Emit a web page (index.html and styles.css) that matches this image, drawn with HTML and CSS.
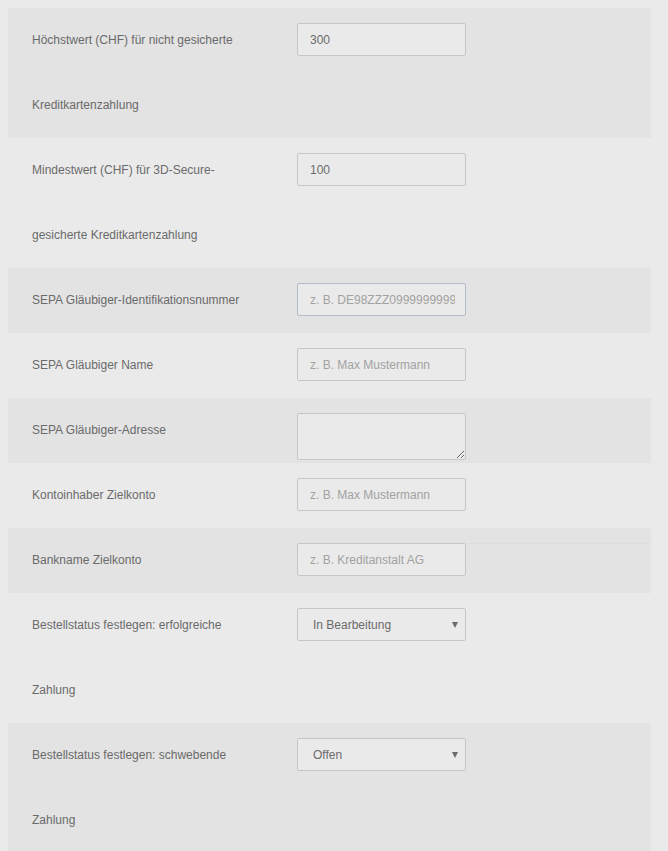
FILE: index.html
```html
<!DOCTYPE html>
<html lang="de">
<head>
<meta charset="utf-8">
<title>Zahlungseinstellungen</title>
<link rel="stylesheet" href="styles.css">
</head>
<body>
<div class="settings">
  <div class="row shaded">
    <div class="label">Höchstwert (CHF) für nicht gesicherte Kreditkartenzahlung</div>
    <div class="field"><input class="control" type="text" value="300"></div>
  </div>
  <div class="row">
    <div class="label">Mindestwert (CHF) für 3D-Secure-gesicherte Kreditkartenzahlung</div>
    <div class="field"><input class="control" type="text" value="100"></div>
  </div>
  <div class="row shaded">
    <div class="label">SEPA Gläubiger-Identifikationsnummer</div>
    <div class="field"><input class="control focus" type="text" placeholder="z. B. DE98ZZZ09999999999"></div>
  </div>
  <div class="row">
    <div class="label">SEPA Gläubiger Name</div>
    <div class="field"><input class="control" type="text" placeholder="z. B. Max Mustermann"></div>
  </div>
  <div class="row shaded">
    <div class="label">SEPA Gläubiger-Adresse</div>
    <div class="field"><textarea class="control area"></textarea></div>
  </div>
  <div class="row">
    <div class="label">Kontoinhaber Zielkonto</div>
    <div class="field"><input class="control" type="text" placeholder="z. B. Max Mustermann"></div>
  </div>
  <div class="row shaded">
    <div class="label">Bankname Zielkonto</div>
    <div class="field field-line"><input class="control" type="text" placeholder="z. B. Kreditanstalt AG"></div>
  </div>
  <div class="row">
    <div class="label">Bestellstatus festlegen: erfolgreiche Zahlung</div>
    <div class="field"><span class="select-wrap"><select class="control select"><option>In Bearbeitung</option><option>Offen</option></select></span></div>
  </div>
  <div class="row shaded">
    <div class="label">Bestellstatus festlegen: schwebende Zahlung</div>
    <div class="field"><span class="select-wrap"><select class="control select"><option>Offen</option><option>In Bearbeitung</option></select></span></div>
  </div>
</div>
</body>
</html>
```

FILE: styles.css
```css
html, body {
  background: #eaeaea;
}
body {
  margin: 8px 8px 0;
  font-family: "Liberation Sans", Arial, sans-serif;
  font-size: 12px;
  color: #6a6a6a;
}
.settings {
  width: 643px;
}
.row {
  display: grid;
  grid-template-columns: 281px 1fr;
  line-height: 65px;
}
.shaded {
  background: #e3e3e3;
}
.label {
  padding: 0 42px 0 24px;
}
.field {
  padding: 15px 0 0 8px;
  line-height: normal;
  position: relative;
}
.field-line::after {
  content: "";
  position: absolute;
  left: 178px;
  right: 0;
  top: 15px;
  border-top: 1px solid #dedede;
}
.control {
  display: block;
  box-sizing: border-box;
  width: 169px;
  height: 33px;
  margin: 0;
  padding: 0 10px 0 12px;
  border: 1px solid #c6c6c6;
  border-radius: 2px;
  background: #eaeaea;
  font-family: "Liberation Sans", Arial, sans-serif;
  font-size: 12px;
  color: #6a6a6a;
  outline: none;
}
.control::placeholder {
  color: #a2a2a2;
}
.focus {
  border-color: #b2bccb;
}
.area {
  height: 47px;
  padding-top: 6px;
  resize: vertical;
}
.select-wrap {
  position: relative;
  display: block;
  width: 169px;
}
.select {
  appearance: none;
  -webkit-appearance: none;
  padding-left: 15px;
}
.select-wrap::after {
  content: "";
  position: absolute;
  right: 8px;
  top: 14px;
  border-left: 3.5px solid transparent;
  border-right: 3.5px solid transparent;
  border-top: 6px solid #6a6a6a;
  pointer-events: none;
}
```
